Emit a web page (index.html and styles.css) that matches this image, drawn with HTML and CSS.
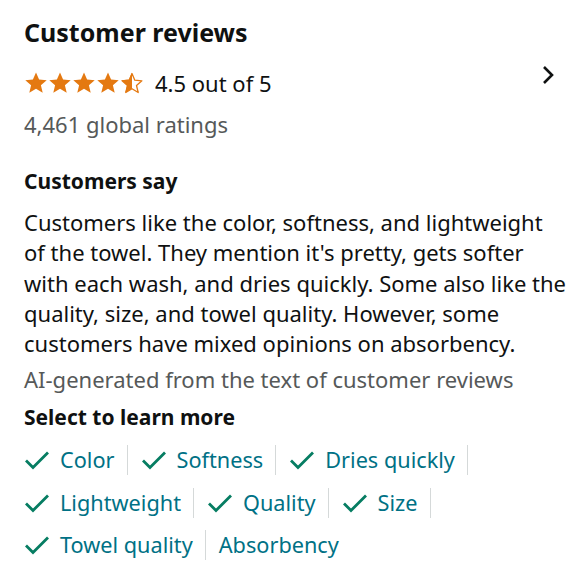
FILE: index.html
```html
<!DOCTYPE html>
<html lang="en">
<head>
<meta charset="utf-8">
<link rel="stylesheet" href="styles.css">
</head>
<body>
<main class="reviews">
  <h2 class="title">Customer reviews</h2>
  <div class="rating-row">
    <div class="rating">
      <span class="stars" aria-label="4.5 out of 5 stars">
        <svg class="star" viewBox="0 0 24 24"><path d="M12 1.5l3.1 7.1 7.6.6-5.8 5 1.8 7.5L12 17.7l-6.7 4 1.8-7.5-5.8-5 7.6-.6z" fill="#E47911"/></svg>
        <svg class="star" viewBox="0 0 24 24"><path d="M12 1.5l3.1 7.1 7.6.6-5.8 5 1.8 7.5L12 17.7l-6.7 4 1.8-7.5-5.8-5 7.6-.6z" fill="#E47911"/></svg>
        <svg class="star" viewBox="0 0 24 24"><path d="M12 1.5l3.1 7.1 7.6.6-5.8 5 1.8 7.5L12 17.7l-6.7 4 1.8-7.5-5.8-5 7.6-.6z" fill="#E47911"/></svg>
        <svg class="star" viewBox="0 0 24 24"><path d="M12 1.5l3.1 7.1 7.6.6-5.8 5 1.8 7.5L12 17.7l-6.7 4 1.8-7.5-5.8-5 7.6-.6z" fill="#E47911"/></svg>
        <svg class="star" viewBox="0 0 24 24"><path d="M12 2.6l2.8 6.6 7.1.6-5.4 4.7 1.7 7L12 17.7l-6.2 3.8 1.7-7-5.4-4.7 7.1-.6z" fill="none" stroke="#E47911" stroke-width="1.3" stroke-linejoin="round"/><path d="M12 1.5v16.2l-6.7 4 1.8-7.5-5.8-5 7.6-.6z" fill="#E47911"/></svg>
      </span>
      <span class="score">4.5 out of 5</span>
    </div>
    <svg class="chevron" viewBox="0 0 12 20"><path d="M2 2l8 8-8 8" fill="none" stroke="#0F1111" stroke-width="2.6"/></svg>
  </div>
  <p class="count">4,461 global ratings</p>

  <h3 class="subtitle">Customers say</h3>
  <p class="summary">Customers like the color, softness, and lightweight of the towel. They mention it's pretty, gets softer with each wash, and dries quickly. Some also like the quality, size, and towel quality. However, some customers have mixed opinions on absorbency.</p>
  <p class="note">AI-generated from the text of customer reviews</p>
  <h3 class="subtitle select">Select to learn more</h3>

  <ul class="aspects">
    <li class="aspect"><svg class="check" viewBox="0 0 26 20"><path d="M2 10.5l7 7L24 2.5" fill="none" stroke="#067D62" stroke-width="2.8"/></svg>Color</li>
    <li class="aspect"><svg class="check" viewBox="0 0 26 20"><path d="M2 10.5l7 7L24 2.5" fill="none" stroke="#067D62" stroke-width="2.8"/></svg>Softness</li>
    <li class="aspect"><svg class="check" viewBox="0 0 26 20"><path d="M2 10.5l7 7L24 2.5" fill="none" stroke="#067D62" stroke-width="2.8"/></svg>Dries quickly</li>
    <li class="aspect"><svg class="check" viewBox="0 0 26 20"><path d="M2 10.5l7 7L24 2.5" fill="none" stroke="#067D62" stroke-width="2.8"/></svg>Lightweight</li>
    <li class="aspect"><svg class="check" viewBox="0 0 26 20"><path d="M2 10.5l7 7L24 2.5" fill="none" stroke="#067D62" stroke-width="2.8"/></svg>Quality</li>
    <li class="aspect"><svg class="check" viewBox="0 0 26 20"><path d="M2 10.5l7 7L24 2.5" fill="none" stroke="#067D62" stroke-width="2.8"/></svg>Size</li>
    <li class="aspect"><svg class="check" viewBox="0 0 26 20"><path d="M2 10.5l7 7L24 2.5" fill="none" stroke="#067D62" stroke-width="2.8"/></svg>Towel quality</li>
    <li class="aspect">Absorbency</li>
  </ul>
</main>
</body>
</html>
```

FILE: styles.css
```css
html, body {
  margin: 0;
  padding: 0;
  background: #ffffff;
}

body {
  font-family: "Noto Sans", "Open Sans", sans-serif;
  color: #0F1111;
}

.reviews {
  padding: 13px 12px 0 24px;
}

.title {
  margin: 0;
  font-size: 25px;
  font-weight: 700;
  line-height: 38px;
}

.rating-row {
  display: flex;
  align-items: center;
  justify-content: space-between;
  margin-top: 16px;
  padding-right: 14px;
}

.rating {
  display: flex;
  align-items: center;
  gap: 11px;
}

.stars {
  display: flex;
}

.star {
  width: 24px;
  height: 24px;
  display: block;
}

.score {
  font-size: 22px;
  line-height: 32px;
}

.chevron {
  width: 12px;
  height: 20px;
  display: block;
  align-self: flex-start;
  margin-top: -2px;
}

.count {
  margin: 10px 0 0 0;
  font-size: 22px;
  line-height: 30px;
  color: #565959;
}

.subtitle {
  margin: 27px 0 0 0;
  font-size: 21px;
  font-weight: 700;
  line-height: 30px;
}

.summary {
  margin: 11px 0 0 0;
  font-size: 22px;
  line-height: 30.3px;
}

.note {
  margin: 6px 0 0 0;
  font-size: 22px;
  line-height: 30px;
  color: #565959;
}

.select {
  margin-top: 8px;
}

.aspects {
  list-style: none;
  margin: 13px 0 0 0;
  padding: 0;
  display: flex;
  flex-wrap: wrap;
  row-gap: 12.5px;
}

.aspect {
  display: flex;
  align-items: center;
  font-size: 21.7px;
  line-height: 30px;
  color: #007185;
  padding-right: 12px;
  margin-right: 13px;
  border-right: 1.5px solid #D5D9D9;
}

.aspect:last-child {
  border-right: none;
}

.check {
  width: 26px;
  height: 20px;
  margin-right: 10px;
  display: block;
}
```
